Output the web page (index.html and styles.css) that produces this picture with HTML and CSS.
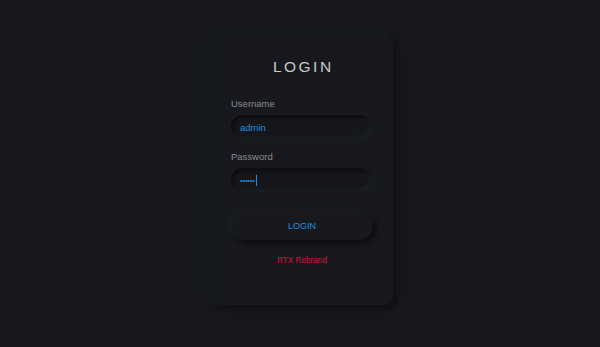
FILE: index.html
```html
<!DOCTYPE html>
<html>
<head>
<meta charset="utf-8">
<link rel="stylesheet" href="styles.css">
</head>
<body>
<div class="page">
  <form class="card">
    <h1 class="title">LOGIN</h1>
    <label class="label">Username</label>
    <div class="field"><span class="value">admin</span></div>
    <label class="label pw">Password</label>
    <div class="field"><span class="dots">••••••</span><span class="caret"></span></div>
    <div class="btn">LOGIN</div>
    <div class="brand">RTX Rebrand</div>
  </form>
</div>
</body>
</html>
```
FILE: styles.css
```css
html, body {
  margin: 0;
  padding: 0;
  background: #16181d;
  font-family: "Liberation Sans", Arial, sans-serif;
}
.page {
  width: 600px;
  height: 347px;
  display: flex;
  justify-content: center;
  align-items: flex-start;
}
.card {
  margin-top: 37px;
  margin-left: 4px;
  width: 182px;
  height: 268px;
  box-sizing: border-box;
  padding: 20px 20px 0 20px;
  background: #17191e;
  border-radius: 8px;
  box-shadow: 3px 3px 8px rgba(0,0,0,0.45), -2px -2px 6px rgba(40,43,50,0.35);
  display: flex;
  flex-direction: column;
}
.title {
  margin: 0;
  height: 20px;
  padding-left: 2.5px;
  text-align: center;
  font-weight: normal;
  font-size: 15.5px;
  letter-spacing: 2.5px;
  color: #c8c9cc;
  line-height: 20px;
}
.label {
  margin-top: 21px;
  font-size: 9.5px;
  line-height: 12px;
  color: #8a8c90;
}
.label.pw { margin-top: 12px; }
.field {
  margin-top: 5px;
  height: 24px;
  width: 141px;
  border-radius: 12px;
  background: #15171b;
  box-shadow: inset 2px 2px 5px rgba(0,0,0,0.55), inset -2px -2px 4px rgba(45,48,55,0.45);
  display: flex;
  align-items: center;
  padding-left: 9px;
  box-sizing: border-box;
}
.value {
  font-size: 9.5px;
  color: #1e8fe0;
}
.dots {
  font-size: 7px;
  line-height: 7px;
  color: #1e8fe0;
}
.caret {
  width: 1px;
  height: 11px;
  background: #1e8fe0;
  margin-left: 1px;
}
.btn {
  margin-top: 20px;
  height: 28px;
  width: 142px;
  border-radius: 14px;
  background: #17191e;
  box-shadow: 3px 3px 6px rgba(0,0,0,0.55), -2px -2px 5px rgba(45,48,55,0.4);
  color: #1e8fe0;
  font-size: 9px;
  display: flex;
  align-items: center;
  justify-content: center;
}
.brand {
  margin-top: 15px;
  text-align: center;
  font-size: 8.2px;
  line-height: 11px;
  color: #d0143c;
}
```
